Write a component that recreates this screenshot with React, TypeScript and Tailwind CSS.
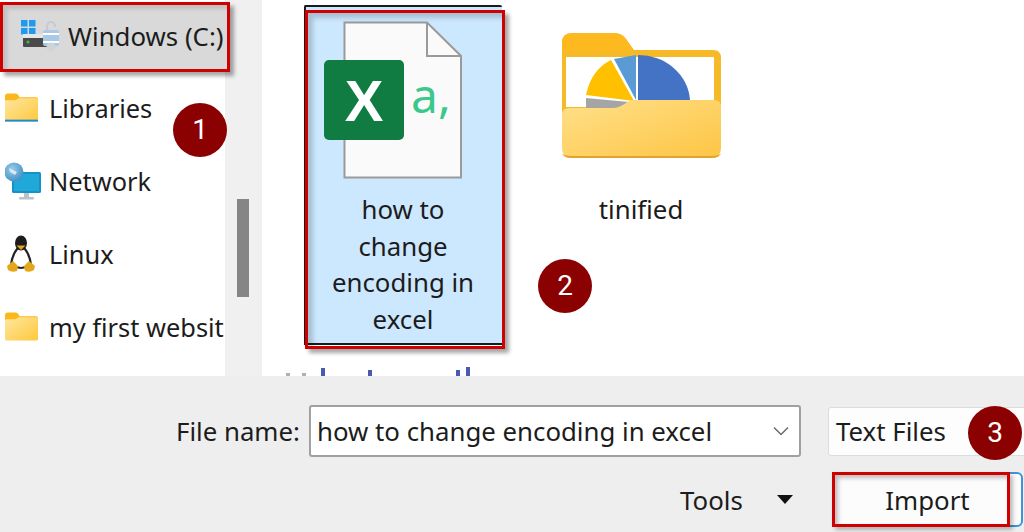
import React from 'react';

const FolderIcon = ({ line }: { line?: boolean }) => (
  <svg width="33" height="32" viewBox="0 0 34 32">
    <path d="M0 4 Q0 1 3 1 H11 Q13 1 14 3 L15 5 H32 Q34 5 34 7 V28 H0 Z" fill="#fbb81c" />
    <path d="M0 9 Q0 8 2 8 H11 L14 6 H32 Q34 6 34 8 V28 Q34 30 32 30 H2 Q0 30 0 28 Z" fill="url(#sideFolder)" />
    {line && <rect x="0" y="28" width="34" height="2" fill="#1d8ad6" />}
    <defs>
      <linearGradient id="sideFolder" x1="0" y1="0" x2="1" y2="1">
        <stop offset="0" stopColor="#ffe79f" />
        <stop offset="1" stopColor="#fdc83c" />
      </linearGradient>
    </defs>
  </svg>
);

const DriveIcon = () => (
  <svg width="40" height="32" viewBox="0 0 40 32">
    <rect x="0" y="0" width="6.5" height="6.5" fill="#1d9bf0" />
    <rect x="8" y="0" width="6.5" height="6.5" fill="#1d9bf0" />
    <rect x="0" y="8" width="6.5" height="6.5" fill="#1d9bf0" />
    <rect x="8" y="8" width="6.5" height="6.5" fill="#1d9bf0" />
    <rect x="2" y="17" width="26" height="10" rx="1" fill="#4a4a4a" />
    <rect x="2" y="14" width="26" height="4" fill="#e6e6e6" />
    <circle cx="7" cy="22" r="1.6" fill="#35c24a" />
    <path d="M26 12 V7 Q26 2 30 2 Q34 2 34 7" fill="none" stroke="#c3ccd4" strokeWidth="2" />
    <rect x="22" y="10" width="16" height="16" rx="2" fill="#a9c9e6" />
    <rect x="22" y="13" width="16" height="2" fill="#fff" />
    <rect x="22" y="21" width="16" height="2" fill="#fff" />
    <circle cx="30" cy="27" r="4.5" fill="#cfd4d9" />
  </svg>
);

const NetworkIcon = () => (
  <svg width="38" height="38" viewBox="0 0 38 38">
    <defs>
      <radialGradient id="globe" cx="0.4" cy="0.35" r="0.7">
        <stop offset="0" stopColor="#9ccbe8" />
        <stop offset="1" stopColor="#3c8fc4" />
      </radialGradient>
    </defs>
    <rect x="7" y="10" width="29" height="21" rx="1.5" fill="#1593c9" />
    <rect x="9" y="12" width="25" height="17" fill="#1fa8d8" />
    <rect x="19" y="31" width="5" height="4" fill="#b8c4cc" />
    <rect x="14" y="35" width="15" height="2.5" rx="1" fill="#b8c4cc" />
    <circle cx="9" cy="10" r="9.5" fill="url(#globe)" />
    <path d="M4 6 L12 10 L10 13 L5 10 Z" fill="#d6e9f5" />
  </svg>
);

const LinuxIcon = () => (
  <svg width="32" height="38" viewBox="0 0 32 38">
    <path d="M16 9 C11 15 7 20 6 30 Q16 36 26 30 C25 20 21 15 16 9 Z" fill="#fff" stroke="#222" strokeWidth="2.2" />
    <ellipse cx="16" cy="8" rx="6" ry="7.5" fill="#1c1c1c" />
    <path d="M11.5 10.5 H20.5 L16 15 Z" fill="#e3a81a" />
    <path d="M2 31 L8 26 L13 31 L12 36 Q7 38 3 35 Z" fill="#e3a81a" />
    <path d="M30 31 L24 26 L19 31 L20 36 Q25 38 29 35 Z" fill="#e3a81a" />
  </svg>
);

const ExcelFile = () => (
  <svg width="198" height="176" viewBox="0 0 198 176">
    <path d="M40.5 17.5 H123 L157 51 V172.5 H40.5 Z" fill="#fafafa" stroke="#9a9a9a" strokeWidth="2" />
    <path d="M123 17.5 V51 H157" fill="none" stroke="#9a9a9a" strokeWidth="2" />
    <rect x="20" y="55" width="80" height="80" rx="5" fill="#107c41" />
    <text x="60" y="116" textAnchor="middle" fontFamily="Liberation Sans" fontWeight="700" fontSize="58" fill="#fff">X</text>
    <text x="107" y="108" fontFamily="Noto Sans" fontSize="48" fill="#3cc88c">a,</text>
  </svg>
);

const PieFolder = () => (
  <svg width="198" height="176" viewBox="0 0 198 176">
    <defs>
      <linearGradient id="bigFolder" x1="0" y1="0" x2="1" y2="1">
        <stop offset="0" stopColor="#ffe08a" />
        <stop offset="1" stopColor="#fdc544" />
      </linearGradient>
    </defs>
    <path d="M20 38 Q20 28 30 28 H72 Q80 28 84 34 L92 45 H171 Q179 45 179 53 V140 H20 Z" fill="#f6b928" />
    <path d="M20 38 Q20 28 30 28 H72 Q80 28 84 34 L92 46 H20 Z" fill="#fdb91e" />
    <rect x="24" y="52" width="148" height="50" fill="#fff" />
    <path d="M96 95 V50 A52 48 0 0 1 148 95 Z" fill="#4472c4" />
    <path d="M94 95 L72 54 L94 50 Z" fill="#5b9bd5" />
    <path d="M92 96 L69 55 Q49 65 44 90 Z" fill="#ffc000" />
    <path d="M44 93 L87 97 L70 106 H44 Z" fill="#a5a5a5" />
    <path d="M20 109 Q20 103 28 103 H70 Q78 103 84 98 Q87 95 94 95 H171 Q179 95 179 101 V143 Q179 153 169 153 H30 Q20 153 20 143 Z" fill="url(#bigFolder)" />
    <path d="M20 148 Q21 153 30 153 H169 Q178 153 179 148 Q178 151 169 151 H30 Q21 151 20 148 Z" fill="#e3a32e" />
  </svg>
);

const Badge = ({ n, className }: { n: number; className: string }) => (
  <div
    className={`absolute w-[54px] h-[54px] rounded-full bg-[#8b0000] text-white text-[28px] flex items-center justify-center ${className}`}
    style={{ fontFamily: 'Roboto, sans-serif' }}
  >
    {n}
  </div>
);

const SideRow = ({ icon, label }: { icon: React.ReactNode; label: string }) => (
  <div className="h-[73px] flex items-center shrink-0 pb-[3px]">
    <div className="w-[49px] pl-[5px] shrink-0 flex items-center">{icon}</div>
    <span className="whitespace-nowrap text-[25.4px]">{label}</span>
  </div>
);

export default function App() {
  return (
    <div
      className="relative w-[1024px] h-[532px] overflow-hidden bg-white text-[#1c1c1c] text-[25.8px] flex flex-col"
      style={{ fontFamily: '"Noto Sans", "Open Sans", sans-serif' }}
    >
      <div className="h-[376px] flex shrink-0 overflow-hidden">
        <div className="w-[225px] shrink-0">
          <div className="relative z-10 w-[230px] h-[70px] mt-[2px] mb-[1px] pb-[2px] bg-[#d9d9d9] border-[3px] border-[#d00000] shadow-[4px_4px_4px_rgba(0,0,0,0.35),inset_4px_4px_4px_rgba(0,0,0,0.12)] flex items-center pl-[18px]">
            <div className="w-[47px] shrink-0 flex items-center"><DriveIcon /></div>
            <span className="whitespace-nowrap">Windows (C:)</span>
          </div>
          <SideRow icon={<FolderIcon line />} label="Libraries" />
          <SideRow icon={<NetworkIcon />} label="Network" />
          <SideRow icon={<LinuxIcon />} label="Linux" />
          <SideRow icon={<FolderIcon />} label="my first websit" />
        </div>

        <div className="w-[37px] shrink-0 bg-[#f0f0f0] pt-[199px] pl-[12px]">
          <div className="w-[12px] h-[98px] bg-[#858585]" />
        </div>

        <div className="flex-1 pl-[42px] pt-[5px]">
          <div className="flex gap-[40px]">
            <div className="relative w-[198px] h-[340px] bg-[#cce8ff] border-[2px] border-[#1a1a1a] border-r-0 rounded-t-[2px] text-center shrink-0">
              <div className="-ml-[2px] -mt-[2px]"><ExcelFile /></div>
              <div className="leading-[36.5px] mt-[10px] -ml-[2px]">how to<br />change<br />encoding in<br />excel</div>
              <div className="absolute -left-[1px] top-[3px] w-[200px] h-[339px] border-[3px] border-[#d00000] shadow-[4px_4px_4px_rgba(0,0,0,0.35),inset_5px_5px_5px_rgba(0,0,0,0.18)]" />
            </div>
            <div className="w-[198px] text-center shrink-0">
              <PieFolder />
              <div className="leading-[36.5px] mt-[10px]">tinified</div>
            </div>
          </div>
          <div className="flex items-start h-[10px] mt-[21px] -ml-[18px]">
            <div className="w-[4px] h-[3px] mt-[7px] bg-[#b0b0b0]" />
            <div className="w-[4px] h-[3px] mt-[7px] ml-[12px] bg-[#b0b0b0]" />
            <div className="w-[4px] h-[9px] mt-[2px] ml-[15px] bg-[#4a5ab0]" />
            <div className="w-[4px] h-[6px] mt-[4px] ml-[43px] bg-[#4a5ab0]" />
            <div className="w-[4px] h-[6px] mt-[4px] ml-[84px] bg-[#4a5ab0]" />
            <div className="w-[4px] h-[9px] mt-[1px] ml-[6px] bg-[#4a5ab0]" />
          </div>
        </div>
      </div>

      <div className="flex-1 bg-[#eeeeee]">
        <div className="flex items-center pl-[176px] pt-[29px]">
          <span className="whitespace-nowrap w-[133px] shrink-0">File name:</span>
          <div className="w-[492px] h-[52px] shrink-0 bg-white border-[2px] border-[#a0a0a0] rounded-[3px] flex items-center justify-between pl-[6px] pr-[10px]">
            <span className="whitespace-nowrap">how to change encoding in excel</span>
            <svg width="16" height="10" viewBox="0 0 16 10" fill="none" stroke="#6a6a6a" strokeWidth="1.5">
              <path d="M1 1.5 L8 8.5 L15 1.5" />
            </svg>
          </div>
          <div className="w-[220px] h-[49px] ml-[27px] shrink-0 bg-[#fdfdfd] border border-[#dcdcdc] rounded-[3px] flex items-center pl-[7px]">
            <span className="whitespace-nowrap">Text Files</span>
          </div>
        </div>
        <div className="flex items-center pl-[680px] mt-[15px]">
          <span className="w-[97px] shrink-0 pt-[2px]">Tools</span>
          <svg className="shrink-0" width="16" height="9" viewBox="0 0 16 9"><path d="M0 0 H16 L8 9 Z" fill="#111" /></svg>
          <div className="relative w-[191px] h-[55px] ml-[39px] shrink-0 bg-[#fcfcfc] border-[2px] border-[#3f93d8] rounded-[6px] flex items-center justify-center">
            <span className="pt-[2px]">Import</span>
            <div className="absolute -left-[2px] -top-[2px] w-[178px] h-[55px] border-[3px] border-[#d00000] shadow-[inset_3px_3px_4px_rgba(0,0,0,0.25),3px_3px_4px_rgba(0,0,0,0.25)]" />
          </div>
        </div>
      </div>

      <Badge n={1} className="left-[173px] top-[103px]" />
      <Badge n={2} className="left-[538px] top-[259px]" />
      <Badge n={3} className="left-[968px] top-[406px]" />
    </div>
  );
}
